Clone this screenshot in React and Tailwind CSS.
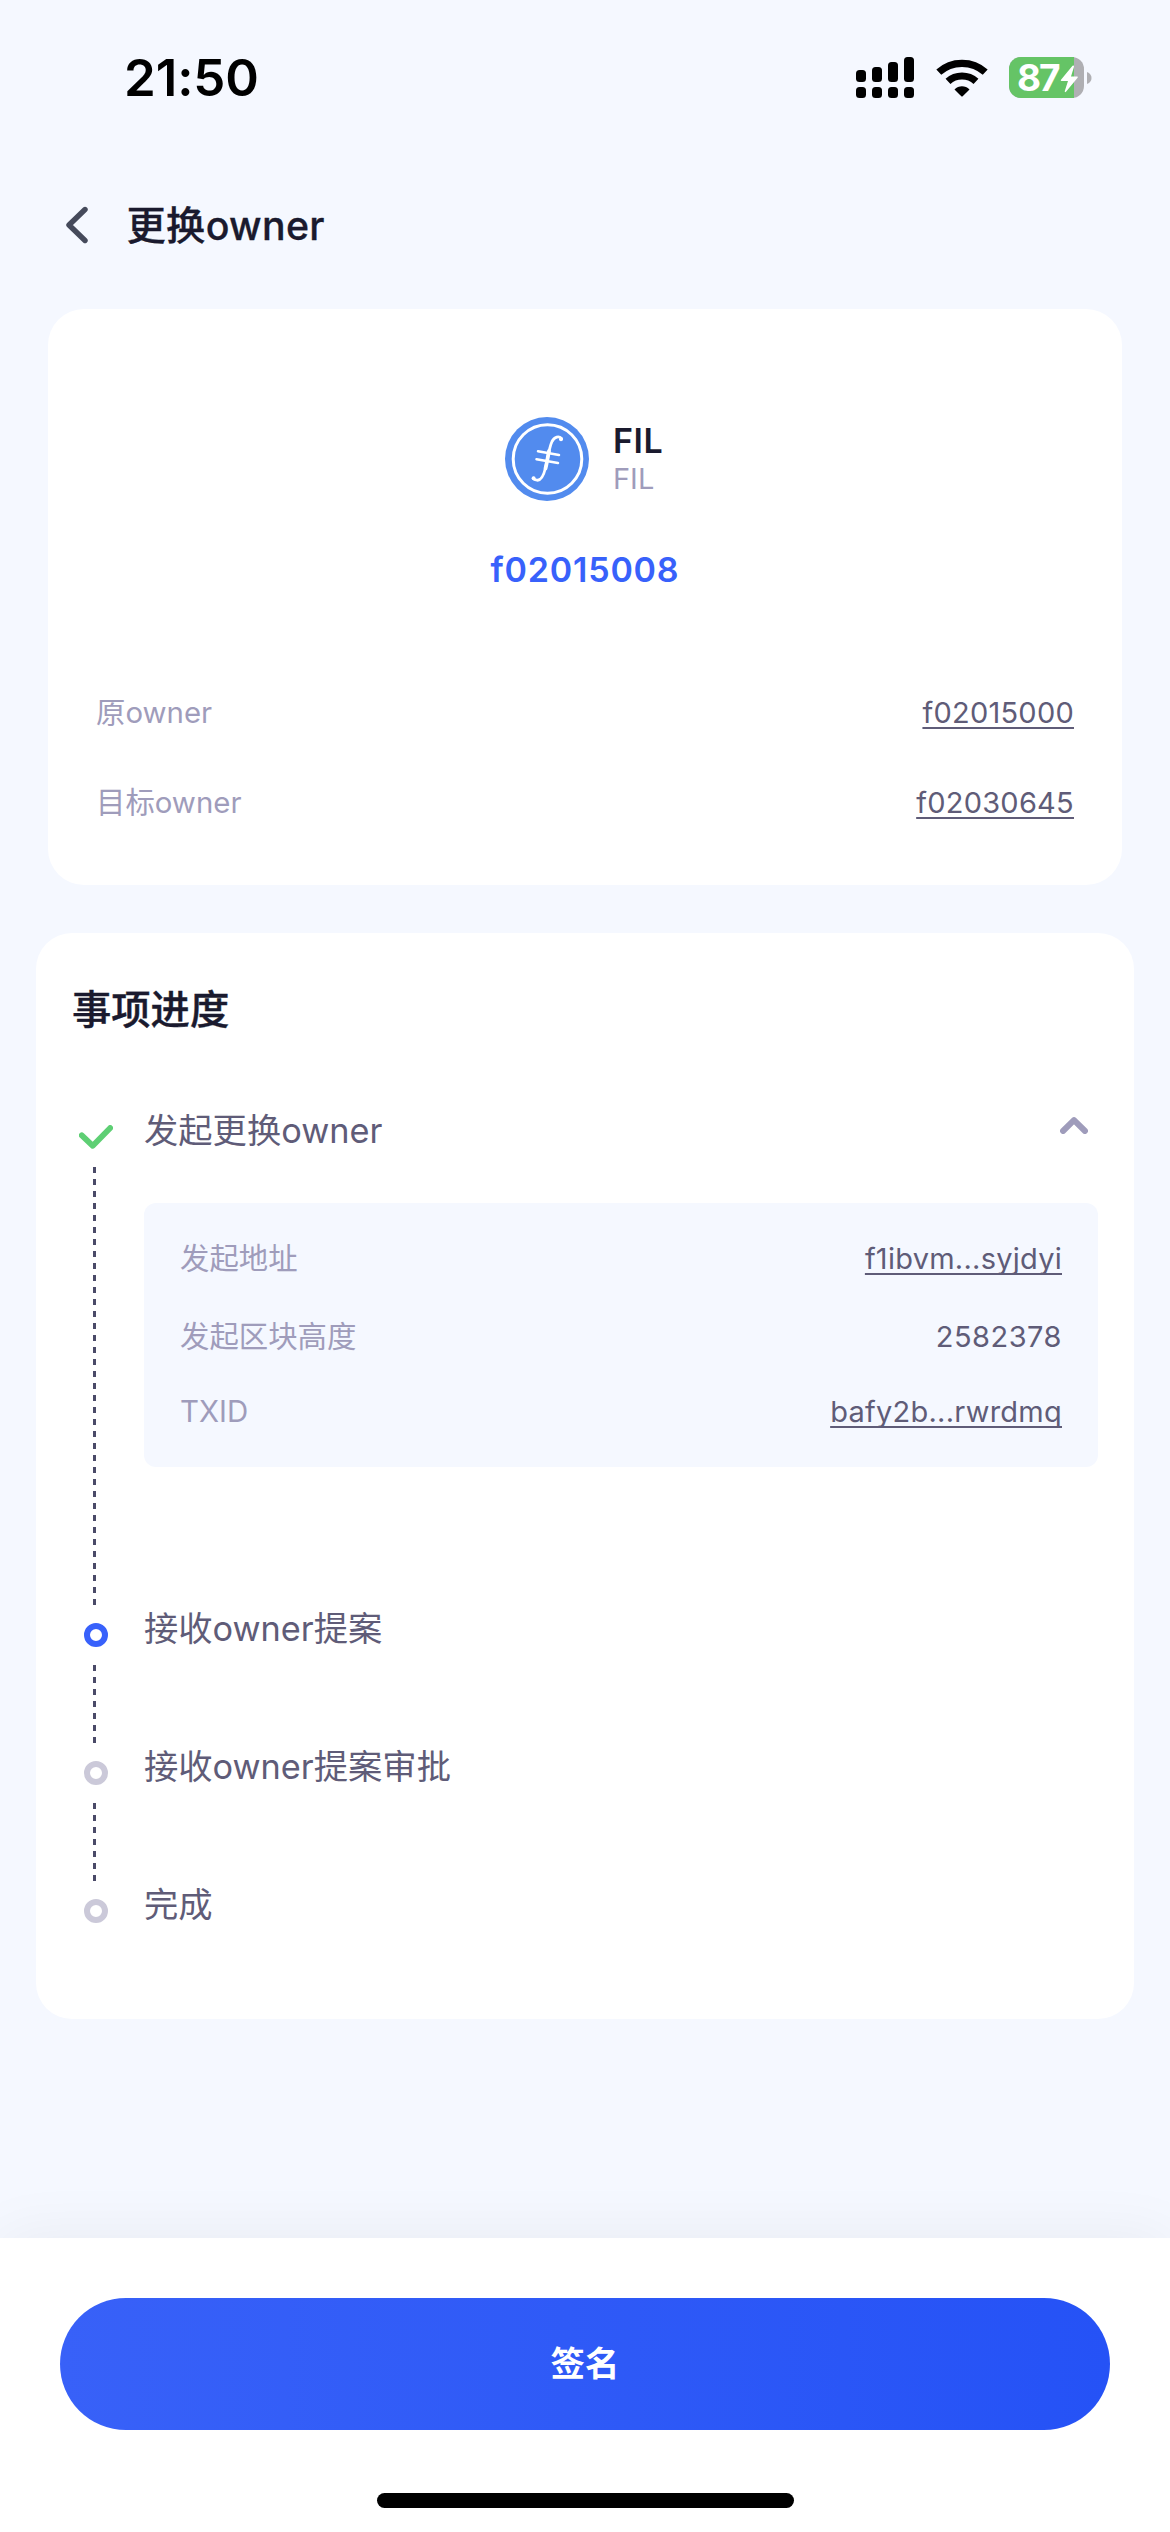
function Signal() {
  return (
    <svg className="block h-[42px] w-[60px]" viewBox="0 0 60 42" fill="#000">
      <rect x="1" y="13" width="10" height="12" rx="3.5" />
      <rect x="17" y="10" width="10" height="15" rx="3.5" />
      <rect x="33" y="5" width="10" height="20" rx="3.5" />
      <rect x="49" y="0" width="10" height="25" rx="3.5" />
      <rect x="1" y="30" width="10" height="11" rx="3.5" />
      <rect x="17" y="30" width="10" height="11" rx="3.5" />
      <rect x="33" y="30" width="10" height="11" rx="3.5" />
      <rect x="49" y="30" width="10" height="11" rx="3.5" />
    </svg>
  );
}

function Wifi() {
  return (
    <svg className="block h-[38px] w-[52px]" viewBox="0 0 52 38">
      <g fill="none" stroke="#000" strokeWidth="7.2">
        <path d="M2.8 13.2 C15.5 1.3 36.5 1.3 49.2 13.2" />
        <path d="M12 22.4 C19.8 15.2 32.2 15.2 40 22.4" />
      </g>
      <path d="M18.5 30.4 C22.7 26.3 29.3 26.3 33.5 30.4 L26.7 37.2 Q26 37.8 25.3 37.2 Z" fill="#000" />
    </svg>
  );
}

function Battery() {
  return (
    <div className="flex items-center gap-[3px]">
      <div className="relative h-[41px] w-[75px] rounded-[12px] bg-[#afafb3]">
        <div className="flex h-full w-[65px] items-center rounded-l-[12px] bg-[#65c466] pl-[8px]">
          <span className="text-[37px] leading-[46px] font-bold tracking-[-2.2px] text-white">87</span>
        </div>
        <svg className="absolute top-[8px] left-[51px] h-[28px] w-[19px]" viewBox="0 0 19 28">
          <path d="M12.5 0.8 L1 14.8 Q0.2 16 1.6 16 H8 L4.8 26 Q4.5 27.8 6 26.8 L17.6 12.8 Q18.4 11.6 17 11.6 H11 L14 1.8 Q14.2 0 12.5 0.8 Z" fill="#fff" />
        </svg>
      </div>
      <svg className="block h-[12px] w-[5px]" viewBox="0 0 5 12">
        <path d="M0 0 Q4.5 1.8 4.5 6 T0 12 Z" fill="#afafb3" />
      </svg>
    </div>
  );
}

function FilLogo() {
  return (
    <svg className="block h-[84px] w-[84px]" viewBox="0 0 84 84" fill="none">
      <circle cx="42" cy="42" r="42" fill="#528bee" />
      <circle cx="42.5" cy="42" r="34.3" stroke="#fff" strokeWidth="3" />
      <g stroke="#fff" strokeLinecap="round">
        <path d="M56.5 21.5 C54 18.8 49.5 19.5 47 24.5 C44 31 42.5 43 40.5 51 C38.5 59 36 63.8 32 63.2 C30 63 28.8 62.3 28.3 61.3" strokeWidth="2.8" />
        <path d="M44 34 C42.8 40 41.7 47 40.5 51.5" strokeWidth="3.8" />
        <path d="M33 34.3 L54 38" strokeWidth="2.5" />
        <path d="M31.5 42.3 L53 46" strokeWidth="2.5" />
      </g>
      <circle cx="56" cy="22.3" r="2" fill="#fff" />
      <circle cx="28.6" cy="61.2" r="2" fill="#fff" />
    </svg>
  );
}

function Row({ label, value, link }) {
  return (
    <div className="flex items-center justify-between leading-[42px]">
      <span className="text-[29.4px] text-[#9f9cbb]">{label}</span>
      <span
        className={
          link
            ? "text-[29px] tracking-[0.25px] text-[#5f5c78] underline decoration-2 underline-offset-[4px] [text-decoration-skip-ink:none]"
            : "text-[29px] tracking-[0.5px] text-[#5f5c78]"
        }
      >
        {value}
      </span>
    </div>
  );
}

function Ring({ active }) {
  return (
    <div
      className={
        active
          ? "h-6 w-6 rounded-full border-[6px] border-[#3861fb]"
          : "h-6 w-6 rounded-full border-[6px] border-[#cbc9d9]"
      }
    />
  );
}

function Step({ label, marker, line, children, toggle }) {
  return (
    <div className="flex">
      <div className="flex w-[72px] shrink-0 flex-col pt-[18px]">
        <div className="flex h-6 w-12 items-center justify-center">{marker}</div>
        {line && (
          <div className="mt-[18px] ml-[21px] w-[3px] grow bg-[repeating-linear-gradient(to_bottom,#4a4a68_0px,#4a4a68_6px,transparent_6px,transparent_12px)]" />
        )}
      </div>
      <div className="grow">
        <div className="flex h-12 items-center justify-between text-[34.3px] leading-[48px] text-[#5f5c78]">
          <span>{label}</span>
          {toggle}
        </div>
        {children}
      </div>
    </div>
  );
}

const check = (
  <svg className="h-[24px] w-[34px]" viewBox="0 0 34 24" fill="none">
    <path d="M2.8 10.3 L13.8 20.8 L31.2 3" stroke="#5ecf74" strokeWidth="5.8" strokeLinecap="round" strokeLinejoin="round" />
  </svg>
);

const chevronUp = (
  <svg className="mr-[10px] mb-[11px] h-[17px] w-[28px]" viewBox="0 0 28 17" fill="none">
    <path d="M3 14 L14 3.2 L25 14" stroke="#9f9cbb" strokeWidth="6" strokeLinecap="round" strokeLinejoin="round" />
  </svg>
);

export default function App() {
  return (
    <div className="flex h-[2532px] w-[1170px] flex-col overflow-hidden bg-[#f5f8ff] font-['Inter','Noto_Sans_CJK_SC',sans-serif]">
      <div className="flex h-[156px] shrink-0 justify-between pr-[78px] pl-[124px]">
        <span className="pt-[46px] text-[51px] leading-[64px] font-semibold tracking-[-0.1px] text-black">21:50</span>
        <div className="flex items-start pt-[57px]">
          <Signal />
          <div className="ml-[21px] pt-[2px]"><Wifi /></div>
          <div className="ml-[21px]"><Battery /></div>
        </div>
      </div>

      <div className="flex h-[153px] shrink-0 items-start pt-[42px] pl-[65px]">
        <svg className="mt-[8px] h-[38px] w-[23px]" viewBox="0 0 23 38" fill="none">
          <path d="M20 3.5 L4 19 L20 34.5" stroke="#454a5b" strokeWidth="5.4" strokeLinecap="round" strokeLinejoin="round" />
        </svg>
        <h1 className="ml-[38.5px] text-[39.3px] leading-[56px] font-medium tracking-[0.3px] text-[#1a1a2e] [-webkit-text-stroke:0.3px_#1a1a2e]">
          更换owner
        </h1>
      </div>

      <section className="mx-12 h-[576px] shrink-0 rounded-[36px] bg-white px-12 pt-[108px]">
        <div className="flex h-[84px] justify-center gap-6">
          <FilLogo />
          <div className="w-[52px] pt-[3px]">
            <div className="text-[34px] leading-[42px] font-semibold tracking-[0.5px] text-[#1a1a2e]">FIL</div>
            <div className="-mt-px text-[29px] leading-[36px] text-[#9f9cbb]">FIL</div>
          </div>
        </div>
        <div className="mt-[45px] text-center text-[34px] leading-[48px] font-semibold tracking-[0.8px] text-[#3861fb]">f02015008</div>
        <div className="mt-[98px] flex flex-col gap-12">
          <Row label="原owner" value="f02015000" link />
          <Row label="目标owner" value="f02030645" link />
        </div>
      </section>

      <section className="mx-9 mt-12 h-[1086px] shrink-0 rounded-[36px] bg-white px-9 pt-[47px]">
        <h2 className="mb-[67px] text-[39.3px] leading-[60px] font-medium text-[#1a1a2e] [-webkit-text-stroke:0.4px_#1a1a2e]">事项进度</h2>
        <Step label="发起更换owner" marker={check} line toggle={chevronUp}>
          <div className="mt-12 mb-[138px] flex h-[264px] flex-col rounded-xl bg-[#f5f8ff] px-9 pt-[35px]">
            <Row label="发起地址" value="f1ibvm...syjdyi" link />
            <div className="mt-9"><Row label="发起区块高度" value="2582378" /></div>
            <div className="mt-[33px]"><Row label="TXID" value="bafy2b...rwrdmq" link /></div>
          </div>
        </Step>
        <Step label="接收owner提案" marker={<Ring active />} line>
          <div className="h-[90px]" />
        </Step>
        <Step label="接收owner提案审批" marker={<Ring />} line>
          <div className="h-[90px]" />
        </Step>
        <Step label="完成" marker={<Ring />} />
      </section>

      <footer className="mt-auto flex h-[294px] shrink-0 flex-col items-center bg-white pt-[60px] shadow-[0_0_60px_rgba(0,0,0,0.06)]">
        <button className="h-[132px] w-[1050px] rounded-full bg-linear-to-r from-[#3861f8] to-[#2552f6] text-[34.5px] leading-[48px] font-bold text-white">
          签名
        </button>
        <div className="mt-[63px] h-[15px] w-[417px] rounded-full bg-black" />
      </footer>
    </div>
  );
}
